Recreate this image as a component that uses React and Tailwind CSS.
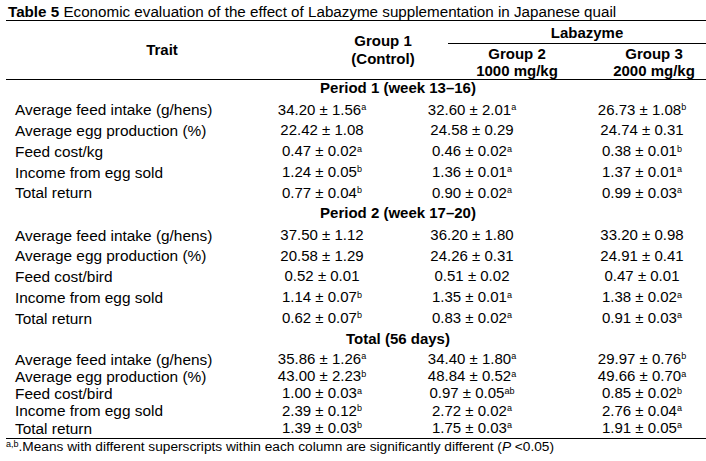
const sections = [
  {
    title: "Period 1 (week 13–16)",
    head: "h-[19.5px] leading-[16px]",
    rows: [
      ["Average feed intake (g/hens)", ["34.20 ± 1.56", "a"], ["32.60 ± 2.01", "a"], ["26.73 ± 1.08", "b"]],
      ["Average egg production (%)", ["22.42 ± 1.08"], ["24.58 ± 0.29"], ["24.74 ± 0.31"]],
      ["Feed cost/kg", ["0.47 ± 0.02", "a"], ["0.46 ± 0.02", "a"], ["0.38 ± 0.01", "b"]],
      ["Income from egg sold", ["1.24 ± 0.05", "b"], ["1.36 ± 0.01", "a"], ["1.37 ± 0.01", "a"]],
      ["Total return", ["0.77 ± 0.04", "b"], ["0.90 ± 0.02", "a"], ["0.99 ± 0.03", "a"]],
    ],
  },
  {
    title: "Period 2 (week 17–20)",
    head: "h-[21.5px] leading-[20px]",
    rows: [
      ["Average feed intake (g/hens)", ["37.50 ± 1.12"], ["36.20 ± 1.80"], ["33.20 ± 0.98"]],
      ["Average egg production (%)", ["20.58 ± 1.29"], ["24.26 ± 0.31"], ["24.91 ± 0.41"]],
      ["Feed cost/bird", ["0.52 ± 0.01"], ["0.51 ± 0.02"], ["0.47 ± 0.01"]],
      ["Income from egg sold", ["1.14 ± 0.07", "b"], ["1.35 ± 0.01", "a"], ["1.38 ± 0.02", "a"]],
      ["Total return", ["0.62 ± 0.07", "b"], ["0.83 ± 0.02", "a"], ["0.91 ± 0.03", "a"]],
    ],
  },
];

const totalRows = [
  ["Average feed intake (g/hens)", ["35.86 ± 1.26", "a"], ["34.40 ± 1.80", "a"], ["29.97 ± 0.76", "b"]],
  ["Average egg production (%)", ["43.00 ± 2.23", "b"], ["48.84 ± 0.52", "a"], ["49.66 ± 0.70", "a"]],
  ["Feed cost/bird", ["1.00 ± 0.03", "a"], ["0.97 ± 0.05", "ab"], ["0.85 ± 0.02", "b"]],
  ["Income from egg sold", ["2.39 ± 0.12", "b"], ["2.72 ± 0.02", "a"], ["2.76 ± 0.04", "a"]],
  ["Total return", ["1.39 ± 0.03", "b"], ["1.75 ± 0.03", "a"], ["1.91 ± 0.05", "a"]],
];

const Val = ({ v }) => (
  <>
    {v[0]}
    {v[1] && <sup className="text-[9px] top-[-0.5em]">{v[1]}</sup>}
  </>
);

const Row = ({ row, h }) => (
  <div className={`flex items-center ${h}`}>
    <div className="w-[241px] pl-[9px] text-[15.4px] whitespace-nowrap">{row[0]}</div>
    <div className="w-[150px] text-center whitespace-nowrap">
      <Val v={row[1]} />
    </div>
    <div className="w-[150px] text-center whitespace-nowrap">
      <Val v={row[2]} />
    </div>
    <div className="ml-[31px] w-[128px] text-center whitespace-nowrap">
      <Val v={row[3]} />
    </div>
  </div>
);

const GroupTitle = ({ children, className }) => (
  <div className={`flex ${className}`}>
    <div className="ml-[312px] w-[160px] text-center font-bold whitespace-nowrap">{children}</div>
  </div>
);

export default function App() {
  return (
    <div className="w-[706px] h-[461px] bg-white text-black font-['Liberation_Sans',Arial,sans-serif] text-[15px] overflow-hidden">
      <div className="ml-[6px]">
        {/* caption */}
        <div className="h-[21px] border-b border-black pt-[3px] pl-[2px] leading-[17px] text-[15.2px] whitespace-nowrap">
          <span className="font-bold">Table 5</span> Economic evaluation of the effect of Labazyme supplementation in Japanese quail
        </div>

        {/* column headers */}
        <div className="flex h-[59px] border-b border-black font-bold leading-[18px]">
          <div className="w-[312px] flex items-center justify-center">Trait</div>
          <div className="w-[130px] flex items-center justify-center text-center">
            Group 1
            <br />
            (Control)
          </div>
          <div className="w-[258px] flex flex-col">
            <div className="h-[23px] border-b border-black pl-[20px] pt-[1px] leading-[21px] text-center">Labazyme</div>
            <div className="flex pt-[1px] leading-[17px]">
              <div className="w-[138px] text-center">
                Group 2
                <br />
                1000 mg/kg
              </div>
              <div className="ml-[16px] w-[104px] text-center whitespace-nowrap">
                Group 3
                <br />
                2000 mg/kg
              </div>
            </div>
          </div>
        </div>

        {/* body */}
        <div className="h-[358px] flex flex-col">
          {sections.map((s) => (
            <div key={s.title}>
              <GroupTitle className={s.head}>{s.title}</GroupTitle>
              {s.rows.map((r, i) => (
                <Row key={i} row={r} h="h-[20.75px]" />
              ))}
            </div>
          ))}
          <GroupTitle className="h-[22px] leading-[19px]">Total (56 days)</GroupTitle>
          {totalRows.map((r, i) => (
            <Row key={i} row={r} h="h-[17.25px]" />
          ))}
        </div>

        {/* footnote */}
        <div className="border-t border-black leading-[16px] text-[13.7px] whitespace-nowrap">
          <sup className="text-[9px] top-[-0.45em]">a,b</sup>.Means with different superscripts within each column are significantly different (<i>P</i> &lt;0.05)
        </div>
      </div>
    </div>
  );
}
